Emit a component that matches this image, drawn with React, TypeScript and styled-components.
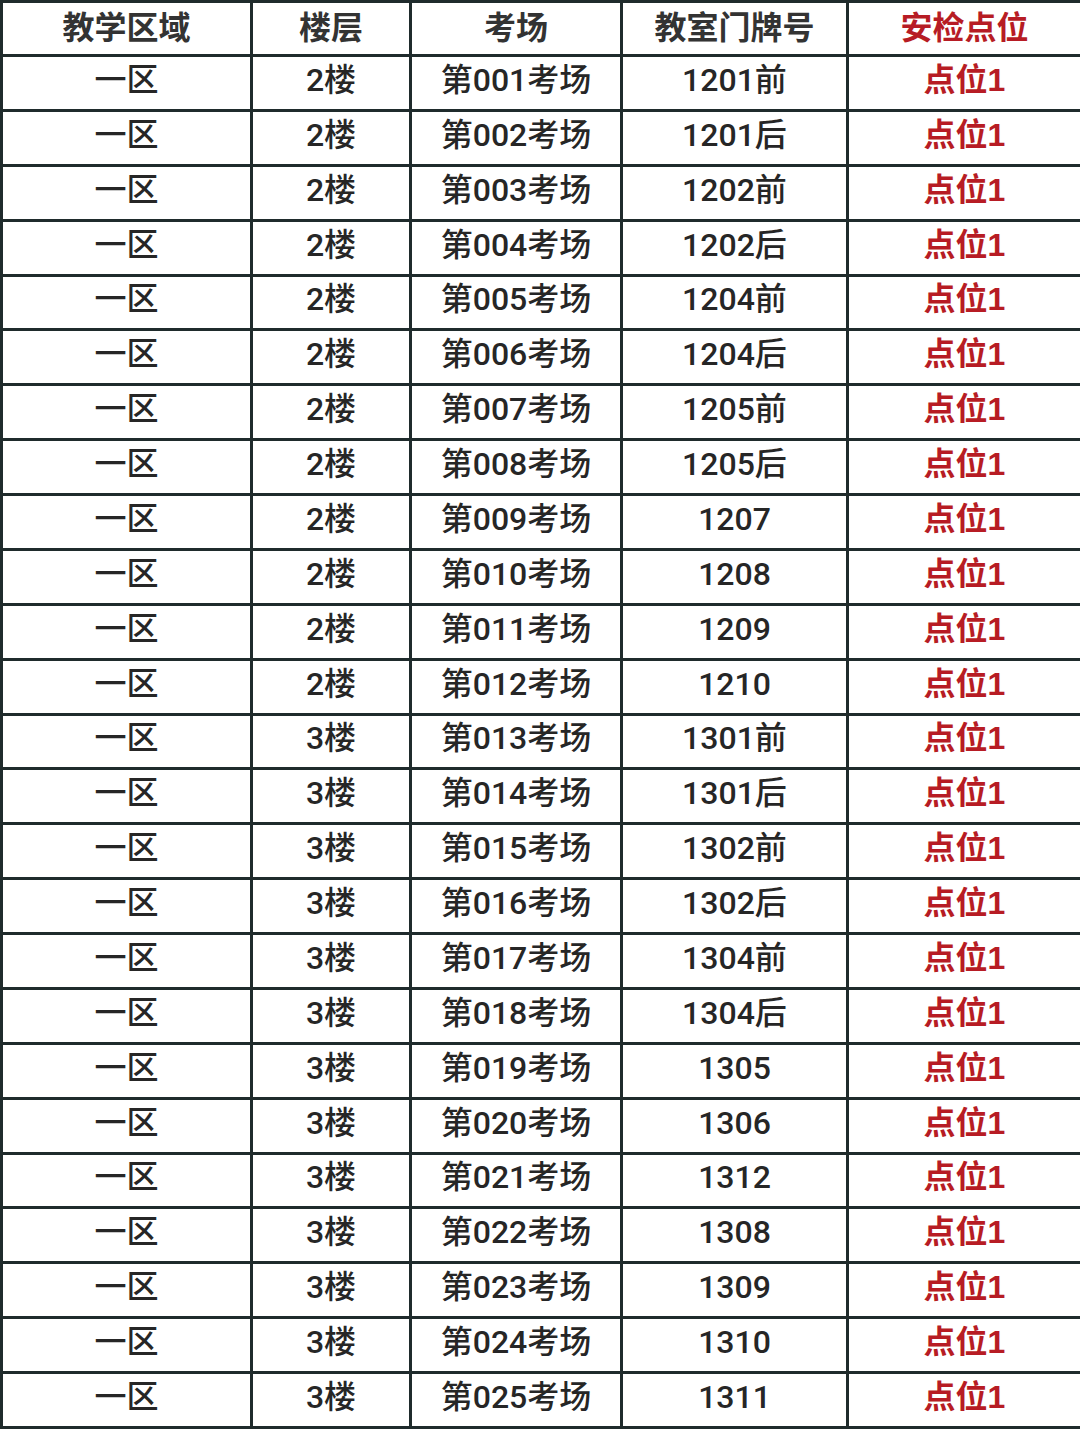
import React from 'react';
import styled, { createGlobalStyle } from 'styled-components';

const GlobalStyle = createGlobalStyle`
  html, body {
    margin: 0;
    padding: 0;
    background: #ffffff;
  }
  body {
    font-family: "Liberation Sans", "Noto Sans CJK SC", sans-serif;
  }
`;

const Table = styled.table`
  width: 1080px;
  border-collapse: collapse;
  table-layout: fixed;
  background: #ffffff;
  border: 3px solid #1f2b2c;
`;

const HeaderCell = styled.th<{ $red?: boolean }>`
  height: 50px;
  padding: 0 0 1px;
  border: 3px solid #1f2b2c;
  text-align: center;
  vertical-align: middle;
  font-size: 32px;
  font-weight: 700;
  color: ${(p) => (p.$red ? '#b71c24' : '#333333')};
  line-height: 1;
`;

const Cell = styled.td<{ $red?: boolean }>`
  height: 45.88px;
  padding: 0 0 6px;
  border: 3px solid #1f2b2c;
  text-align: center;
  vertical-align: middle;
  font-family: ${(p) =>
    p.$red
      ? '"Liberation Sans", "Noto Sans CJK SC", sans-serif'
      : 'Roboto, "Noto Sans CJK SC", sans-serif'};
  font-size: 32px;
  font-weight: ${(p) => (p.$red ? 700 : 500)};
  color: ${(p) => (p.$red ? '#b71c24' : '#262626')};
  line-height: 1;
`;

const columns = [
  { title: '教学区域', width: 250 },
  { title: '楼层', width: 159 },
  { title: '考场', width: 211 },
  { title: '教室门牌号', width: 226 },
  { title: '安检点位', width: 234, red: true },
];

const rooms = [
  '1201前', '1201后', '1202前', '1202后', '1204前', '1204后', '1205前', '1205后',
  '1207', '1208', '1209', '1210',
  '1301前', '1301后', '1302前', '1302后', '1304前', '1304后',
  '1305', '1306', '1312', '1308', '1309', '1310', '1311',
];

const rows = rooms.map((room, i) => ({
  area: '一区',
  floor: i < 12 ? '2楼' : '3楼',
  exam: `第${String(i + 1).padStart(3, '0')}考场`,
  room,
  point: '点位1',
}));

export default function App() {
  return (
    <>
      <GlobalStyle />
      <Table>
        <colgroup>
          {columns.map((c) => (
            <col key={c.title} style={{ width: c.width }} />
          ))}
        </colgroup>
        <thead>
          <tr>
            {columns.map((c) => (
              <HeaderCell key={c.title} $red={c.red}>
                {c.title}
              </HeaderCell>
            ))}
          </tr>
        </thead>
        <tbody>
          {rows.map((r) => (
            <tr key={r.exam}>
              <Cell>{r.area}</Cell>
              <Cell>{r.floor}</Cell>
              <Cell>{r.exam}</Cell>
              <Cell>{r.room}</Cell>
              <Cell $red>{r.point}</Cell>
            </tr>
          ))}
        </tbody>
      </Table>
    </>
  );
}
